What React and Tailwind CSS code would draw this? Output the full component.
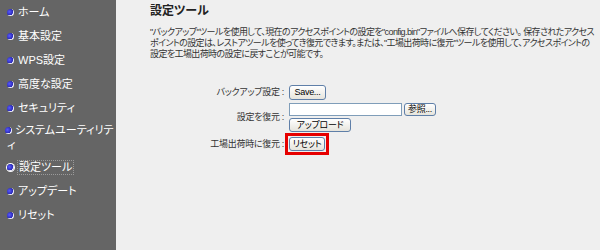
const JP = "font-['Liberation_Sans','Noto_Sans_CJK_JP',sans-serif]";

const MENU = [
  { label: "ホーム" },
  { label: "基本設定" },
  { label: "WPS設定" },
  { label: "高度な設定" },
  { label: "セキュリティ" },
  { label: "システムユーティリテ", wrap: "ィ" },
  { label: "設定ツール", active: true },
  { label: "アップデート" },
  { label: "リセット" },
];

const Bullet = ({ active }) => (
  <span
    className={`shrink-0 w-[7px] h-[7px] rounded-full bg-[radial-gradient(circle_at_35%_40%,#5a5aff_0%,#2a2ab8_55%,#e8e8ff_60%,#ffffff_100%)] ${
      active ? "ring-1 ring-white" : ""
    }`}
  />
);

const XpButton = ({ children, className = "" }) => (
  <button
    type="button"
    className={`flex items-center justify-center whitespace-nowrap px-0 rounded-[3px] border border-[#5f7fa8] bg-gradient-to-b from-white to-[#e6e4dc] text-[9px] leading-none text-black ${JP} [font-feature-settings:'palt'] ${className}`}
  >
    {children}
  </button>
);

export default function App() {
  return (
    <div className={`flex w-[600px] h-[250px] overflow-hidden bg-[#efefef] ${JP}`}>
      {/* sidebar */}
      <div className="w-[116px] shrink-0 bg-[#656565] text-white text-[11px] [font-feature-settings:'palt']">
        {MENU.map((m) => (
          <div
            key={m.label}
            className={`flex items-center gap-[4px] ${m.wrap ? "h-[35px] pl-[5px]" : "h-[24px] pl-[7px]"}`}
          >
            {m.wrap ? (
              <div className="flex flex-col leading-[15px]">
                <div className="flex items-center gap-[3px]">
                  <Bullet />
                  <span className="whitespace-nowrap">{m.label}</span>
                </div>
                <span className="pl-[2px]">{m.wrap}</span>
              </div>
            ) : (
              <>
                <Bullet active={m.active} />
                <span
                  className={`whitespace-nowrap leading-[13px] ${
                    m.active ? "outline outline-1 outline-dotted outline-[#9a9a9a] px-[1px]" : ""
                  }`}
                >
                  {m.label}
                </span>
              </>
            )}
          </div>
        ))}
      </div>

      {/* content */}
      <div className="flex-1 pl-[34px] pt-[4px] text-[#333] [font-feature-settings:'palt']">
        <h1 className="text-[12px] font-bold leading-[14px] text-[#222]">設定ツール</h1>
        <div className="mt-[9px] text-[9px] leading-[11px] whitespace-nowrap tracking-[-0.6px]">
          <div>"バックアップ"ツールを使用して、現在のアクセスポイントの設定を"config.bin"ファイルへ保存してください。 保存されたアクセス</div>
          <div>ポイントの設定は、レストアツールを使ってき復元できます。または、"工場出荷時に復元"ツールを使用して、アクセスポイントの</div>
          <div>設定を工場出荷時の設定に戻すことが可能です。</div>
        </div>

        <div className="mt-[24px] flex flex-col text-[9px] tracking-[-0.3px]">
          <div className="flex items-center h-[17px]">
            <div className="w-[136px] text-right pr-[2px]">バックアップ設定 :</div>
            <XpButton className="ml-[3px] w-[37px] h-[15px]">Save...</XpButton>
          </div>

          <div className="flex items-center mt-[2px]">
            <div className="w-[136px] text-right pr-[2px]">設定を復元 :</div>
            <div className="ml-[3px] flex flex-col gap-[2px]">
              <div className="flex items-center gap-[2px]">
                <input
                  type="text"
                  className="w-[113px] h-[13px] bg-white border border-[#7f9db9] outline-none"
                />
                <XpButton className="w-[32px] h-[13px]">参照...</XpButton>
              </div>
              <XpButton className="w-[62px] h-[14px]">アップロード</XpButton>
            </div>
          </div>

          <div className="flex items-center mt-[1px]">
            <div className="w-[136px] text-right pr-[2px] pt-[2px]">工場出荷時に復元 :</div>
            <div className="ml-[-1px] border-[3px] border-[#e60000] p-[1px]">
              <XpButton className="w-[36px] h-[14px]">リセット</XpButton>
            </div>
          </div>
        </div>
      </div>
    </div>
  );
}
